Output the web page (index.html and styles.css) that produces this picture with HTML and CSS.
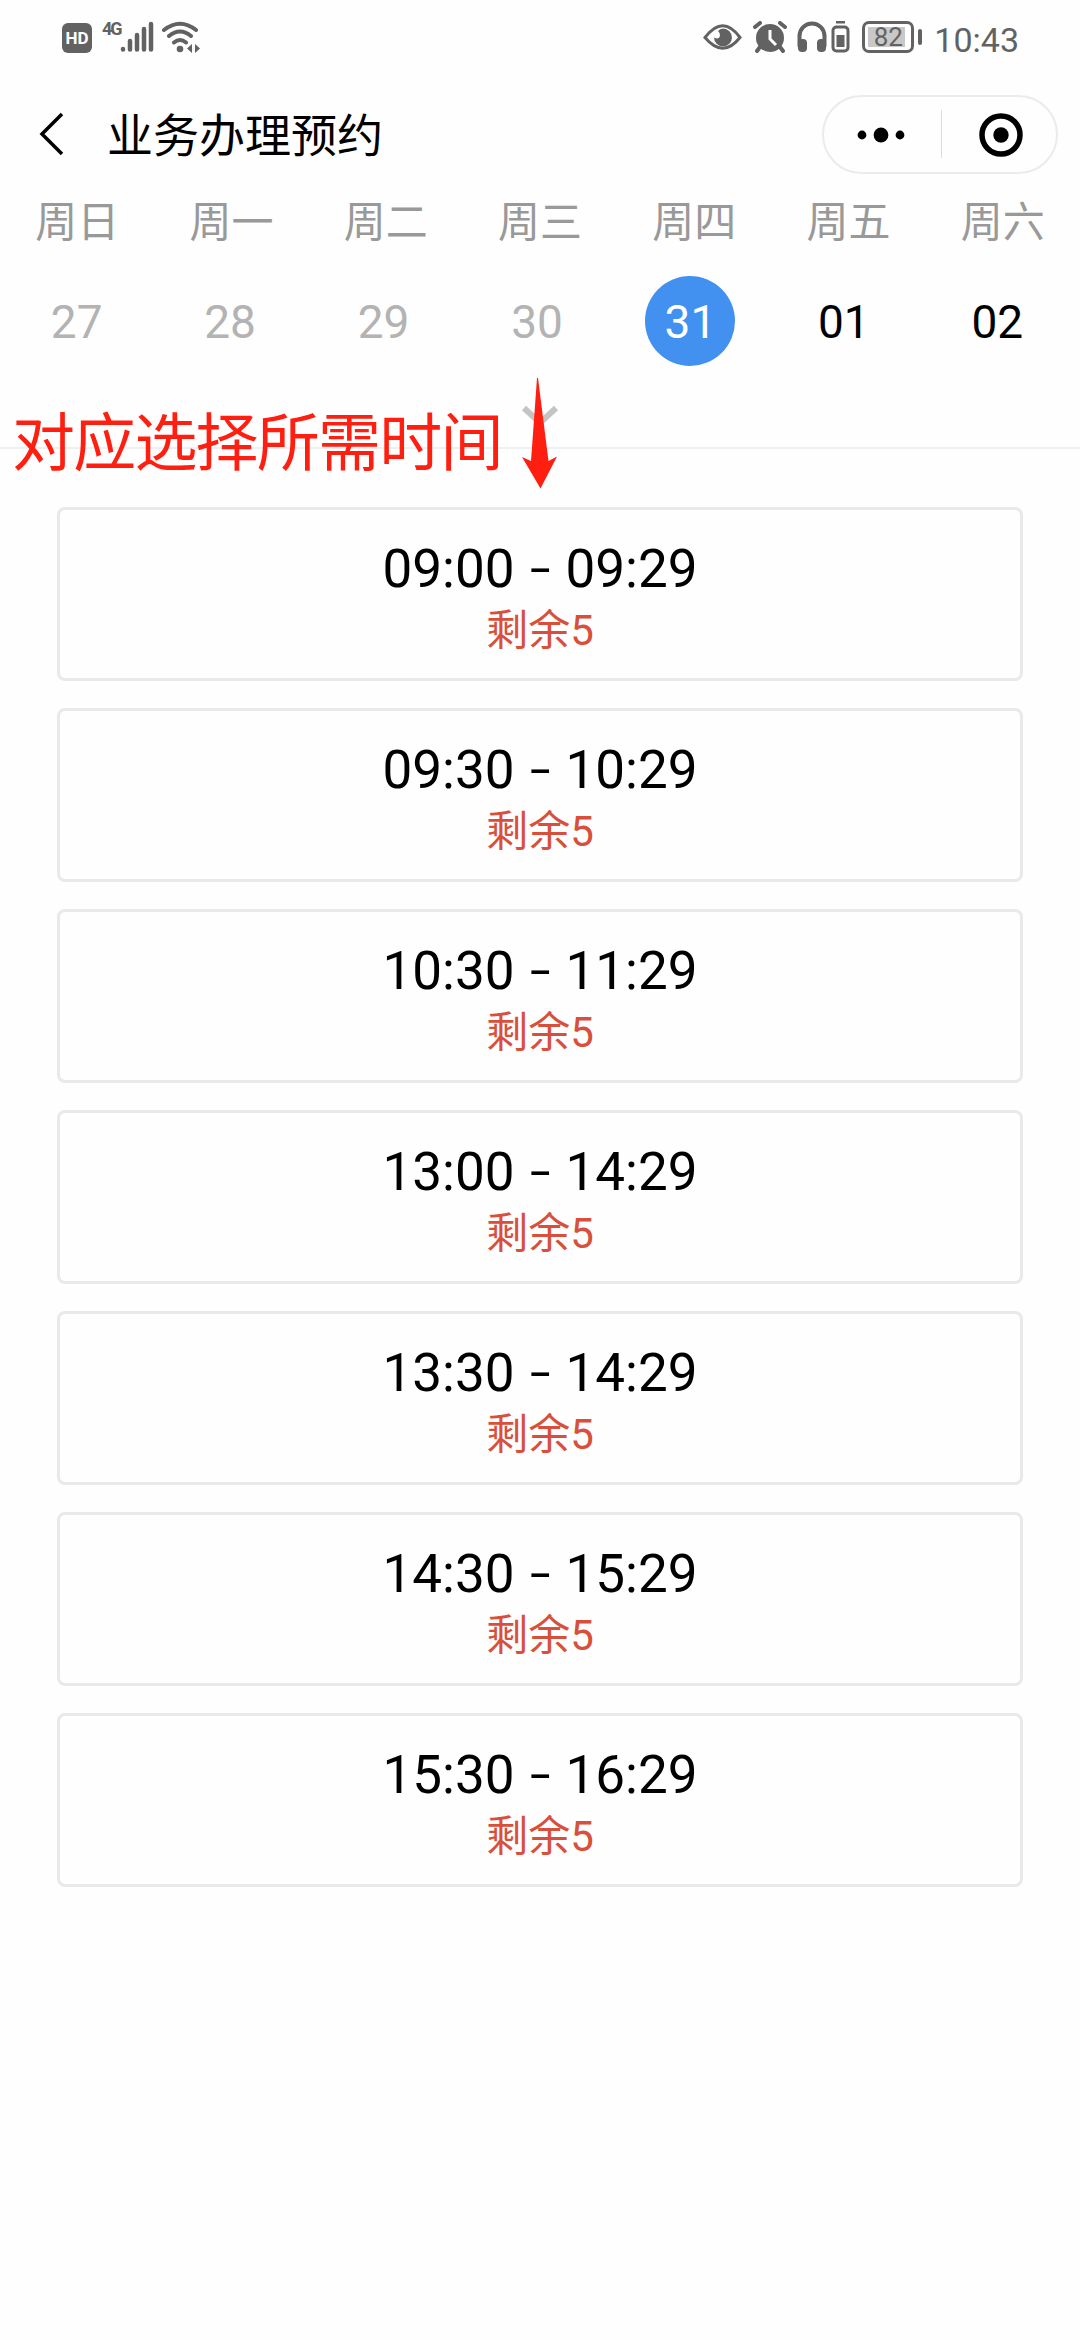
FILE: index.html
```html
<!DOCTYPE html>
<html lang="zh-CN">
  <head>
    <meta charset="UTF-8" />
    <meta name="viewport" content="width=device-width, initial-scale=1.0" />
    <title>业务办理预约</title>
    <link rel="stylesheet" href="styles.css">
  </head>

  <body>
    <div class="status-bar">
      <div class="status-left">
        <span class="hd">HD</span>
        <span class="network">4G</span>
        <svg class="signal" width="34" height="32" viewBox="0 0 34 32">
          <path d="M3 28v.5M10 20v8.5M17 14v14.5M24 8v20.5M31 3v25.5" />
        </svg>
        <svg class="wifi" width="40" height="32" viewBox="0 0 40 32">
          <path class="line" d="M3 9Q19 -3.500 35 9M8 15Q19 6 30 15M13 21.500Q19 16.500 25 21.500" />
          <circle cx="19" cy="28" r="3.300" />
          <path d="M31 23v9l-5-4.500zM34 23v9l5-4.500z" />
        </svg>
      </div>
      <div class="status-right">
        <svg class="eye" width="40" height="32" viewBox="0 0 40 32">
          <path class="line" d="M2 16.500Q20 -7 37 16.500Q20 38 2 16.500z" />
          <path d="M20 7.500a9 9 0 1 1-9 9q5 2.500 6-1.500 .5-3-2-5 2-2.500 5-2.500z" />
        </svg>
        <svg class="alarm" width="34" height="32" viewBox="0 0 34 32">
          <circle cx="17" cy="17" r="14" />
          <path class="line" d="M2 6l5-4M27 2l5 4M7 26l-3 4M27 26l3 4" />
          <path class="hands" d="M17 9v9l6 6" />
        </svg>
        <svg class="headset" width="30" height="32" viewBox="0 0 30 32">
          <path class="line" d="M2.500 25V15a12.500 12.500 0 0 1 25 0v10" />
          <rect x="1" y="18" width="9" height="13" rx="4" />
          <rect x="20" y="18" width="9" height="13" rx="4" />
        </svg>
        <svg class="headset-battery" width="19" height="32" viewBox="0 0 19 32">
          <rect class="line" x="2" y="6" width="15" height="24" rx="3.500" />
          <path d="M5 0h9v2.500H5zM5.500 14h8v12h-8z" />
        </svg>
        <div class="battery">82</div>
        <span class="clock">10:43</span>
      </div>
    </div>

    <div class="nav-bar">
      <svg class="back" width="26" height="44" viewBox="0 0 26 44">
        <path d="M23 2L3 22l20 20" />
      </svg>
      <h1>业务办理预约</h1>
      <div class="capsule">
        <svg width="117" height="75" viewBox="0 0 117 75">
          <circle cx="38" cy="38" r="4.400" />
          <circle cx="57" cy="38" r="7.400" />
          <circle cx="76" cy="38" r="4.400" />
        </svg>
        <svg class="close" width="115" height="75" viewBox="0 0 115 75">
          <circle class="ring" cx="60" cy="38" r="19" />
          <circle cx="60" cy="38" r="7.700" />
        </svg>
      </div>
    </div>

    <div class="calendar">
      <div class="weekdays">
        <span>周日</span>
        <span>周一</span>
        <span>周二</span>
        <span>周三</span>
        <span>周四</span>
        <span>周五</span>
        <span>周六</span>
      </div>
      <div class="dates">
        <span class="past">27</span>
        <span class="past">28</span>
        <span class="past">29</span>
        <span class="past">30</span>
        <span class="selected">31</span>
        <span>01</span>
        <span>02</span>
      </div>
      <svg class="expand" width="38" height="24" viewBox="0 0 38 24">
        <path d="M3 3l16 15L35 3" />
      </svg>

      <!-- hint drawn over the calendar -->
      <div class="hint">对应选择所需时间</div>
      <svg class="hint-arrow" width="36" height="112" viewBox="0 0 36 112">
        <path d="M15 0h1L26.500 83l8.500-4.500-16.500 32L0 79l9 4z" />
      </svg>
    </div>

    <div class="slots">
      <div class="slot">
        <div class="time">09:00 <i>-</i> 09:29</div>
        <div class="left">剩余5</div>
      </div>
      <div class="slot">
        <div class="time">09:30 <i>-</i> 10:29</div>
        <div class="left">剩余5</div>
      </div>
      <div class="slot">
        <div class="time">10:30 <i>-</i> 11:29</div>
        <div class="left">剩余5</div>
      </div>
      <div class="slot">
        <div class="time">13:00 <i>-</i> 14:29</div>
        <div class="left">剩余5</div>
      </div>
      <div class="slot">
        <div class="time">13:30 <i>-</i> 14:29</div>
        <div class="left">剩余5</div>
      </div>
      <div class="slot">
        <div class="time">14:30 <i>-</i> 15:29</div>
        <div class="left">剩余5</div>
      </div>
      <div class="slot">
        <div class="time">15:30 <i>-</i> 16:29</div>
        <div class="left">剩余5</div>
      </div>
    </div>
  </body>
</html>
```
FILE: styles.css
```css
* {
  box-sizing: border-box;
}

body {
  margin: 0;
  min-height: 100vh;
  background-color: #fefefe;
  color: #000;
  font-family: Roboto, "Noto Sans CJK SC", sans-serif;
}

svg {
  display: block;
  flex: none;
}

/* status bar */
.status-bar {
  display: flex;
  justify-content: space-between;
  height: 76px;
  padding: 21px 61px 0 62px;
  color: #626262;
  fill: #626262;
}

.status-bar .line {
  fill: none;
  stroke: #626262;
  stroke-width: 4;
  stroke-linecap: round;
}

.status-left,
.status-right {
  display: flex;
  align-items: flex-start;
}

.hd {
  width: 30px;
  height: 30px;
  margin-top: 2px;
  border-radius: 6px;
  background-color: #626262;
  color: #fff;
  font-size: 17px;
  font-weight: bold;
  line-height: 31px;
  text-align: center;
}

.network {
  width: 18px;
  margin-left: 10px;
  font-size: 18px;
  font-weight: bold;
  line-height: 16px;
  letter-spacing: -2px;
}

.signal {
  stroke: #626262;
  stroke-width: 4.5;
  stroke-linecap: round;
}

.wifi {
  margin-left: 7px;
}

.status-right .eye .line {
  stroke-width: 3;
}

.alarm {
  margin-left: 10px;
}

.alarm .hands {
  fill: none;
  stroke: #fff;
  stroke-width: 3;
}

.headset {
  margin-left: 10px;
}

.headset-battery {
  margin-left: 4px;
}

.status-right .headset-battery .line {
  stroke-width: 3;
}

.battery {
  position: relative;
  width: 52px;
  height: 32px;
  margin-left: 12px;
  border: 3px solid #626262;
  border-radius: 7px;
  background: linear-gradient(#c8c8c8, #c8c8c8) 3px center / 37px 20px no-repeat;
  font-size: 26px;
  line-height: 27px;
  text-align: center;
}

.battery::after {
  content: "";
  position: absolute;
  top: 5px;
  right: -11px;
  width: 4px;
  height: 16px;
  border-radius: 2px;
  background-color: #626262;
}

.clock {
  margin-left: 20px;
  font-size: 34px;
  line-height: 38px;
}

/* nav bar */
.nav-bar {
  display: flex;
  align-items: center;
  height: 116px;
  padding: 0 22px 0 39px;
}

.back {
  fill: none;
  stroke: #000;
  stroke-width: 3.5;
}

h1 {
  flex: 1;
  margin: 4px 0 0 42px;
  font-size: 46px;
  font-weight: normal;
  line-height: 60px;
}

.capsule {
  display: flex;
  width: 236px;
  height: 79px;
  border: 2px solid #ebebeb;
  border-radius: 40px;
}

.close {
  background: linear-gradient(#dcdcdc, #dcdcdc) left center / 1px 48px no-repeat;
}

.ring {
  fill: none;
  stroke: #000;
  stroke-width: 5.5;
}

/* calendar */
.calendar {
  position: relative;
  height: 257px;
  border-bottom: 2px solid #efefef;
}

.weekdays,
.dates {
  display: grid;
  grid-template-columns: repeat(7, 1fr);
  text-align: center;
}

.weekdays {
  padding-top: 1px;
  color: #999;
  font-size: 42px;
  line-height: 60px;
}

.dates {
  justify-items: center;
  width: 1074px;
  margin-top: 23px;
  font-size: 46px;
  line-height: 92px;
}

.dates span {
  width: 90px;
  height: 90px;
  border-radius: 50%;
}

.dates .past {
  color: #b3b3b3;
}

.dates .selected {
  background-color: #4291f0;
  color: #fff;
}

.expand {
  margin: 39px auto 0;
  fill: none;
  stroke: #c4c4c4;
  stroke-width: 6;
}

.hint {
  position: absolute;
  top: 201px;
  left: 12px;
  color: #ff1f10;
  font-family: "Noto Sans CJK SC", sans-serif;
  font-size: 63px;
  line-height: 90px;
  letter-spacing: -1.8px;
  white-space: nowrap;
}

.hint-arrow {
  position: absolute;
  top: 186px;
  left: 522px;
  fill: #ff1f10;
}

/* time slots */
.slots {
  display: flex;
  flex-direction: column;
  gap: 27px;
  padding: 58px 57px 0;
}

.slot {
  height: 174px;
  padding-top: 27px;
  border: 3px solid #e9e9e9;
  border-radius: 8px;
  text-align: center;
}

.time {
  font-size: 53px;
  line-height: 64px;
  word-spacing: 5px;
}

.time i {
  display: inline-block;
  font-style: normal;
  transform: scale(1.4, 0.9);
}

.left {
  color: #d8503c;
  font-size: 42px;
  line-height: 60px;
}
```
